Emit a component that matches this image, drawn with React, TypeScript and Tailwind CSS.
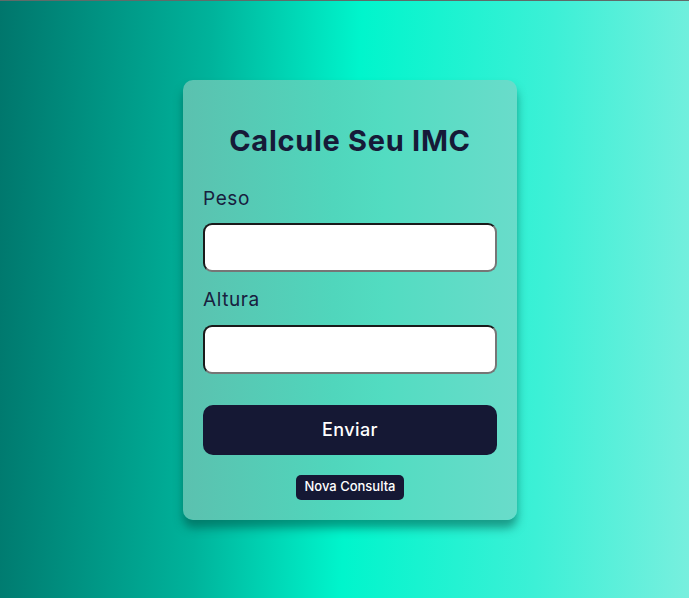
export default function App() {
    return (
        <div className="min-h-screen w-full border-t border-[#5f6b69] bg-[linear-gradient(92deg,#00766c_0%,#00b39b_30%,#00f5cc_51%,#3cf0d6_78%,#78efde_100%)] flex items-center justify-center pl-[11px] font-['Inter',sans-serif]">
            <form
                className="w-[334px] h-[440px] rounded-[10px] bg-[linear-gradient(90deg,#5bc1af_0%,#50d6bc_45%,#52dcc1_60%,#69dcca_100%)] shadow-[0_8px_10px_rgba(0,70,60,0.5)] px-5 pt-[44px] pb-5 flex flex-col"
                onSubmit={(e) => e.preventDefault()}
            >
                <h1 className="text-center text-[29px] leading-[34px] font-bold text-[#161a38] tracking-[0.7px]">
                    Calcule Seu IMC
                </h1>

                <label className="mt-[28px] text-[19px] leading-6 text-[#18203e] tracking-[0.6px] translate-y-[1px]">Peso</label>
                <input className="mt-[13px] h-[49px] w-full rounded-[9px] border-2 border-t-[#1a1a1a] border-l-[#1a1a1a] border-r-[#767676] border-b-[#767676] bg-white outline-none" />

                <label className="mt-[15px] text-[19px] leading-6 text-[#18203e] tracking-[0.6px] translate-y-[1px]">Altura</label>
                <input className="mt-[14px] h-[49px] w-full rounded-[9px] border-2 border-t-[#1a1a1a] border-l-[#1a1a1a] border-r-[#767676] border-b-[#767676] bg-white outline-none" />

                <button className="mt-[31px] h-[50px] w-full rounded-[10px] bg-[#151834] text-white text-[18px] font-medium tracking-[0.4px]">
                    Enviar
                </button>

                <button
                    type="button"
                    className="mt-5 self-center h-[25px] w-[108px] rounded-[5px] bg-[#151834] text-white text-[13px] font-medium"
                >
                    Nova Consulta
                </button>
            </form>
        </div>
    )
}
